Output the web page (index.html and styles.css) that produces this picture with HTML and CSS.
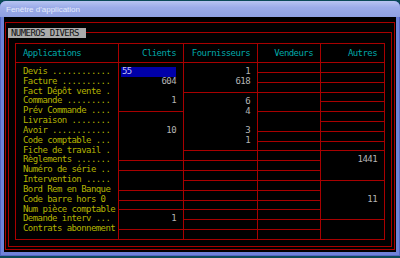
FILE: index.html
```html
<!DOCTYPE html>
<html lang="fr">
<head>
    <meta charset="UTF-8">
    <title>Fenêtre d'application</title>
    <link rel="stylesheet" href="styles.css">
</head>
<body>
    <div class="window">
        <div class="titlebar">Fenêtre d'application</div>
        <div class="client">
            <div class="frame">
                <div class="section">
                    <div class="tab">NUMEROS DIVERS</div>
                    <div class="table">
                        <div class="col apps">
                            <div class="head">Applications</div>
                            <div class="labels">
                                <div>Devis ............</div>
                                <div>Facture ..........</div>
                                <div>Fact Dépôt vente .</div>
                                <div>Commande .........</div>
                                <div>Prév Commande ....</div>
                                <div>Livraison ........</div>
                                <div>Avoir ............</div>
                                <div>Code comptable ...</div>
                                <div>Fiche de travail .</div>
                                <div>Règlements .......</div>
                                <div>Numéro de série ..</div>
                                <div>Intervention .....</div>
                                <div>Bord Rem en Banque</div>
                                <div>Code barre hors 0</div>
                                <div>Num pièce comptable</div>
                                <div>Demande interv ...</div>
                                <div>Contrats abonnement</div>
                            </div>
                        </div>

                        <div class="col w-clients">
                            <div class="head">Clients</div>
                            <div class="body">
                                <div class="seg s5">
                                    <div class="val"><span class="field">55</span></div>
                                    <div class="val">604</div>
                                    <div class="val"></div>
                                    <div class="val">1</div>
                                </div>
                                <div class="seg s5">
                                    <div class="val"></div>
                                    <div class="val">10</div>
                                </div>
                                <div class="seg s1"></div>
                                <div class="seg s2"></div>
                                <div class="seg s1"></div>
                                <div class="seg s1"></div>
                                <div class="seg s2">
                                    <div class="val">1</div>
                                </div>
                                <div class="seg s1"></div>
                            </div>
                        </div>

                        <div class="col w-fourn">
                            <div class="head">Fournisseurs</div>
                            <div class="body">
                                <div class="seg s3">
                                    <div class="val">1</div>
                                    <div class="val">618</div>
                                </div>
                                <div class="seg s6">
                                    <div class="val">6</div>
                                    <div class="val">4</div>
                                    <div class="val"></div>
                                    <div class="val">3</div>
                                    <div class="val">1</div>
                                </div>
                                <div class="seg s1"></div>
                                <div class="seg s1"></div>
                                <div class="seg s1"></div>
                                <div class="seg s1"></div>
                                <div class="seg s1"></div>
                                <div class="seg s1"></div>
                                <div class="seg s1"></div>
                                <div class="seg s1"></div>
                                <div class="seg s1"></div>
                            </div>
                        </div>

                        <div class="col w-vend">
                            <div class="head">Vendeurs</div>
                            <div class="body">
                                <div class="seg s1"></div>
                                <div class="seg s1"></div>
                                <div class="seg s1"></div>
                                <div class="seg s2"></div>
                                <div class="seg s2"></div>
                                <div class="seg s1"></div>
                                <div class="seg s1"></div>
                                <div class="seg s1"></div>
                                <div class="seg s1"></div>
                                <div class="seg s1"></div>
                                <div class="seg s1"></div>
                                <div class="seg s1"></div>
                                <div class="seg s1"></div>
                                <div class="seg s1"></div>
                                <div class="seg s1"></div>
                                <div class="seg s1"></div>
                            </div>
                        </div>

                        <div class="col w-autres">
                            <div class="head">Autres</div>
                            <div class="body">
                                <div class="seg s1"></div>
                                <div class="seg s1"></div>
                                <div class="seg s1"></div>
                                <div class="seg s1"></div>
                                <div class="seg s1"></div>
                                <div class="seg s1"></div>
                                <div class="seg s1"></div>
                                <div class="seg s1"></div>
                                <div class="seg s1"></div>
                                <div class="seg s3">
                                    <div class="val">1441</div>
                                </div>
                                <div class="seg s4">
                                    <div class="val"></div>
                                    <div class="val">11</div>
                                </div>
                                <div class="seg s2"></div>
                            </div>
                        </div>
                    </div>
                </div>
            </div>
        </div>
    </div>
</body>
</html>
```

FILE: styles.css
```css
:root {
    --r: 9.833px;
}

body {
    margin: 0;
    background-color: #0b4a58;
    height: 258px;
    overflow: hidden;
}

.window {
    margin-top: 1px;
    height: 255px;
    box-sizing: border-box;
    display: flex;
    flex-direction: column;
    background-color: #6e82d8;
    border-radius: 6px 6px 0 0;
    padding-bottom: 4px;
    box-shadow: inset 1px 0 0 #5366c4, inset -1px 0 0 #5366c4, inset 0 -1px 0 #5366c4;
}

.titlebar {
    height: 16px;
    line-height: 17px;
    padding-left: 6px;
    border-radius: 6px 6px 0 0;
    background: linear-gradient(#b8c4f2, #9cace9 40%, #90a1e3);
    color: #e4eafb;
    font-family: "Liberation Sans", Arial, sans-serif;
    font-size: 8px;
}

.client {
    flex: 1;
    margin: 0 4px;
    background-color: #000;
    padding: 5px 1px 2px;
    box-sizing: border-box;
    display: flex;
    font-family: "DejaVu Sans Mono", monospace;
    font-size: 9px;
    letter-spacing: -0.57px;
}

.frame {
    flex: 1;
    display: flex;
    border: 1px solid #a80000;
    padding: 9px 2px 2px;
}

.section {
    flex: 1;
    position: relative;
    border: 1px solid #a80000;
    padding: 10px 6px 6px;
}

.tab {
    position: absolute;
    top: -5px;
    left: -1px;
    height: 10px;
    line-height: 10px;
    padding: 0 7px 0 3px;
    background-color: #ababab;
    color: #111;
}

.table {
    height: 197px;
    box-sizing: border-box;
    display: flex;
    border: 1px solid #a80000;
}

.col {
    display: flex;
    flex-direction: column;
    border-right: 1px solid #a80000;
    text-align: right;
    color: #b4b4b4;
}

.col:last-child {
    border-right: none;
}

.apps { width: 102px; text-align: left; }
.w-clients { width: 64px; }
.w-fourn { width: 73px; }
.w-vend { width: 62px; }
.w-autres { flex: 1; }

.head {
    height: 18px;
    line-height: 18px;
    border-bottom: 1px solid #a80000;
    padding-right: 7px;
    color: #00a8a8;
}

.apps .head {
    padding: 0 0 0 7px;
}

.labels {
    padding: 4px 0 0 7px;
    color: #b4b400;
}

.labels div {
    height: var(--r);
    line-height: var(--r);
    white-space: pre;
}

/* 18 text rows, snapped to whole pixels so the rules stay crisp */
.body {
    flex: 1;
    display: grid;
    grid-template-rows: 10px 10px 10px 9px 10px 10px 10px 10px 9px 10px 10px 10px 10px 10px 9px 10px 10px 9px;
}

.seg {
    border-bottom: 1px solid #a80000;
    padding-top: 4px;
    overflow: hidden;
}

.seg:last-child {
    border-bottom: none;
}

.s1 { grid-row: span 1; }
.s2 { grid-row: span 2; }
.s3 { grid-row: span 3; }
.s4 { grid-row: span 4; }
.s5 { grid-row: span 5; }
.s6 { grid-row: span 6; }

.val {
    height: var(--r);
    line-height: var(--r);
    padding-right: 7px;
}

.field {
    display: block;
    margin-left: 2px;
    padding-left: 1px;
    text-align: left;
    background-color: #0000a8;
    color: #c4c4f4;
}
```
